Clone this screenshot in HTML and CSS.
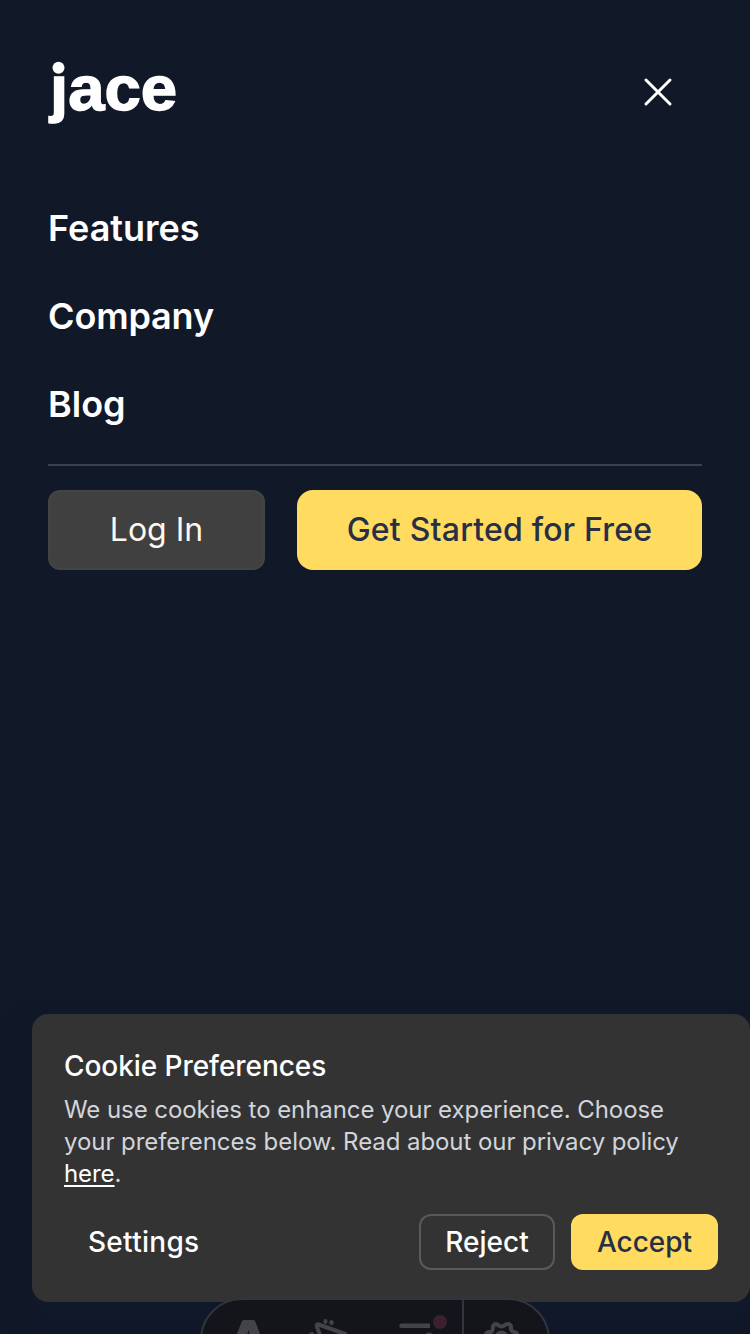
FILE: index.html
```html
<!DOCTYPE html>
<html lang="en">
<head>
<meta charset="utf-8">
<title>Jace</title>
<link rel="stylesheet" href="styles.css">
</head>
<body>
<div class="page">
  <header class="header">
    <svg class="logo" viewBox="0 0 132 72" role="img" aria-label="jace"><text class="logo-text" x="4" y="53.500" textLength="127" lengthAdjust="spacingAndGlyphs">jace</text><circle class="logo-dot" cx="12.500" cy="11.700" r="6"/></svg>
    <button class="close" aria-label="Close menu"><svg width="32" height="32" viewBox="0 0 32 32"><path d="M4 4 28 28M28 4 4 28"/></svg></button>
  </header>
  <nav class="nav">
    <a class="nav-link">Features</a>
    <a class="nav-link company">Company</a>
    <a class="nav-link">Blog</a>
  </nav>
  <div class="actions">
    <button class="btn login">Log In</button>
    <button class="btn start">Get Started for Free</button>
  </div>
</div>
<section class="cookie">
  <h2 class="cookie-title">Cookie Preferences</h2>
  <p class="cookie-text">We use cookies to enhance your experience. Choose<br>your preferences below. Read about our privacy policy<br><a class="link">here</a>.</p>
  <div class="cookie-actions">
    <button class="cbtn settings">Settings</button>
    <button class="cbtn reject">Reject</button>
    <button class="cbtn accept">Accept</button>
  </div>
</section>
<div class="toolbar">
  <svg class="tools" width="350" height="36" viewBox="0 0 350 36">
    <path class="solid" d="M41.500 24q.7-2 2.500-2h9q1.800 0 2.500 2l9 24H53l-4.500-16L44 48H32.500z"/>
    <path class="stroke" d="M122 42 117 29Q116 25 120 27L145 36M112 36 109 38"/>
    <ellipse class="solid" cx="125.500" cy="23.500" rx="2" ry="2.400"/>
    <ellipse class="solid" cx="131.500" cy="24.500" rx="2.200" ry="2.600"/>
    <path class="solid" d="M201.500 25.500H230V30H201.500a2.250 2.250 0 0 1 0-4.500z"/>
    <circle class="dot" cx="240" cy="24" r="7"/>
    <circle class="solid" cx="229" cy="39.500" r="5"/>
    <path class="rule" d="M263 0V36"/>
    <path class="stroke" d="M286 42V36Q287 33.500 291 34Q293 33 293 28Q295 25 298 27Q301.500 30 305 27Q309 24.500 311 28Q310 33 314 34Q318 34 317 39"/>
    <circle class="stroke" cx="301.500" cy="39.500" r="5"/>
  </svg>
</div>
</body>
</html>
```
FILE: styles.css
```css
* { box-sizing: border-box; }
body {
  margin: 0;
  height: 1334px;
  overflow: hidden;
  background: #111827;
  font-family: Inter, "Liberation Sans", sans-serif;
  color: #fff;
  position: relative;
}
button { font: inherit; border: 0; margin: 0; padding: 0; }
.page { padding: 56px 48px 0; }
.header {
  display: flex;
  justify-content: space-between;
  height: 72px;
  padding-right: 28px;
}
.logo { display: block; width: 132px; height: 72px; margin-left: -2px; overflow: visible; }
.logo-text {
  font-family: "Liberation Sans", Arial, sans-serif;
  font-size: 63px;
  font-weight: 700;
  fill: #fff;
  stroke: #fff;
  stroke-width: 1.4;
  clip-path: polygon(0 18px, 140px 18px, 140px 80px, 0 80px) view-box;
}
.logo-dot { fill: #fff; }
.close { width: 32px; height: 32px; margin-top: 20px; background: none; }
.close svg { display: block; }
.close path { stroke: #fff; stroke-width: 3; stroke-linecap: round; }
.nav {
  display: flex;
  flex-direction: column;
  gap: 32px;
  padding: 72px 0 32px;
  border-bottom: 2px solid #374151;
}
.nav-link {
  height: 56px;
  line-height: 56px;
  font-size: 36px;
  font-weight: 600;
}
.company { letter-spacing: -.15px; }
.actions { display: flex; gap: 32px; padding-top: 24px; }
.btn { height: 80px; font-size: 32px; border-radius: 14px; padding-bottom: 2px; }
.login {
  width: 217px;
  color: #fff7ed;
  background: #404040;
  border: 2px solid #444;
  border-radius: 12px;
}
.start { flex: 1; color: #272e45; background: #ffdb60; font-weight: 500; letter-spacing: .2px; border-radius: 16px; }
.cookie {
  position: absolute;
  left: 32px;
  top: 1014px;
  width: 718px;
  height: 288px;
  padding: 32px;
  border-radius: 16px;
  background: #333;
  box-shadow: 0 20px 30px rgba(16, 26, 48, .6);
}
.cookie-title { margin: 0; font-size: 28px; line-height: 40px; font-weight: 500; letter-spacing: -.06px; }
.cookie-text {
  margin: 8px 0 24px;
  font-size: 24px;
  line-height: 32px;
  letter-spacing: -.07px;
  color: #d1d5db;
  white-space: nowrap;
}
.link { color: #fff; text-decoration: underline; text-underline-offset: 3px; text-decoration-thickness: 2px; }
.cookie-actions { display: flex; gap: 16px; }
.cbtn { height: 56px; font-size: 28px; font-weight: 500; color: #fff; border-radius: 12px; }
.settings { margin-right: auto; padding: 0 24px; background: none; letter-spacing: .28px; }
.reject { width: 136px; background: transparent; border: 2px solid #5a5a5a; }
.accept { width: 147px; color: #272e45; background: #ffdb60; }
.toolbar {
  position: absolute;
  left: 200px;
  top: 1298px;
  width: 350px;
  height: 36px;
  overflow: hidden;
}
.toolbar::before {
  content: "";
  position: absolute;
  inset: 0 0 -48px;
  background: #14151b;
  border: 2px solid #30353f;
  border-radius: 42px;
}
.tools { position: relative; display: block; }
.solid { fill: #434449; }
.stroke { fill: none; stroke: #434449; stroke-width: 4; stroke-linecap: round; stroke-linejoin: round; }
.dot { fill: #3c202e; }
.rule { stroke: #30353f; stroke-width: 2; }
```
